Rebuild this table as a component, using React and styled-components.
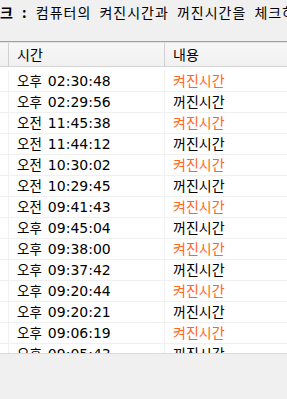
import React from "react";
import styled, { createGlobalStyle } from "styled-components";

const Global = createGlobalStyle`
  html, body { margin: 0; padding: 0; background: #f0f0f0; overflow: hidden; }
  #root { width: 287px; height: 399px; overflow: hidden; }
`;

const KR = `"Noto Sans CJK KR", "Noto Sans", sans-serif`;
const NUM = `"DejaVu Sans", "Noto Sans CJK KR", sans-serif`;

const Page = styled.div`
  width: 287px;
  height: 399px;
  display: flex;
  flex-direction: column;
  background: #f0f0f0;
  overflow: hidden;
`;

const TitleBar = styled.div`
  height: 41px;
  box-sizing: border-box;
  padding-top: 2px;
  white-space: nowrap;
  overflow: hidden;
  font-family: ${KR};
  font-size: 14px;
  letter-spacing: 1px;
  word-spacing: 4px;
  line-height: 20px;
  color: #000;
`;

const Strong = styled.b`
  font-weight: 700;
`;

const ListView = styled.div`
  height: 313px;
  box-sizing: border-box;
  border-top: 1px solid #a0a0a0;
  border-bottom: 1px solid #dadada;
  background: #fff;
  overflow: hidden;
  display: flex;
  flex-direction: column;
`;

const Cols = `grid-template-columns: 9px 156px 1fr;`;

const Header = styled.div`
  display: grid;
  ${Cols}
  height: 25px;
  flex: none;
  box-sizing: border-box;
  background: linear-gradient(#f7f7f7, #f1f1f1);
  border-top: 1px solid #e3e3e3;
  border-bottom: 1px solid #d5d5d5;
`;

const HeadCell = styled.div`
  box-sizing: border-box;
  border-right: ${(p) => (p.$last ? "none" : "1px solid #d0d0d0")};
  padding-left: 8px;
  font-family: ${KR};
  font-size: 14px;
  line-height: 23px;
  color: #000;
  white-space: nowrap;
`;

const Body = styled.div`
  padding-top: 4px;
  display: flex;
  flex-direction: column;
`;

const Row = styled.div`
  display: grid;
  ${Cols}
  height: 21px;
  flex: none;
  box-sizing: border-box;
  border-bottom: 1px solid #f0f0f0;
`;

const Cell = styled.div`
  box-sizing: border-box;
  border-right: ${(p) => (p.$last ? "none" : "1px solid #f0f0f0")};
  padding-left: 8px;
  font-family: ${KR};
  font-size: 14px;
  line-height: 18px;
  white-space: nowrap;
  color: ${(p) => (p.$on ? "#ff651e" : "#000")};
`;

const Ampm = styled.span`
  font-family: ${KR};
  font-size: 13.5px;
`;

const Digits = styled.span`
  font-family: ${NUM};
  font-size: 14px;
  margin-left: 6px;
`;

const rows = [
  ["오후", "02:30:48", true],
  ["오후", "02:29:56", false],
  ["오전", "11:45:38", true],
  ["오전", "11:44:12", false],
  ["오전", "10:30:02", true],
  ["오전", "10:29:45", false],
  ["오전", "09:41:43", true],
  ["오후", "09:45:04", false],
  ["오후", "09:38:00", true],
  ["오후", "09:37:42", false],
  ["오후", "09:20:44", true],
  ["오후", "09:20:21", false],
  ["오후", "09:06:19", true],
  ["오후", "09:05:43", false],
];

export default function App() {
  return (
    <Page>
      <Global />
      <TitleBar>
        <Strong>크 :</Strong> 컴퓨터의 켜진시간과 꺼진시간을 체크하는 프로그램
      </TitleBar>
      <ListView>
        <Header>
          <HeadCell />
          <HeadCell>시간</HeadCell>
          <HeadCell $last>내용</HeadCell>
        </Header>
        <Body>
          {rows.map(([ap, t, on], i) => (
            <Row key={i}>
              <Cell />
              <Cell>
                <Ampm>{ap}</Ampm>
                <Digits>{t}</Digits>
              </Cell>
              <Cell $last $on={on}>{on ? "켜진시간" : "꺼진시간"}</Cell>
            </Row>
          ))}
        </Body>
      </ListView>
    </Page>
  );
}
